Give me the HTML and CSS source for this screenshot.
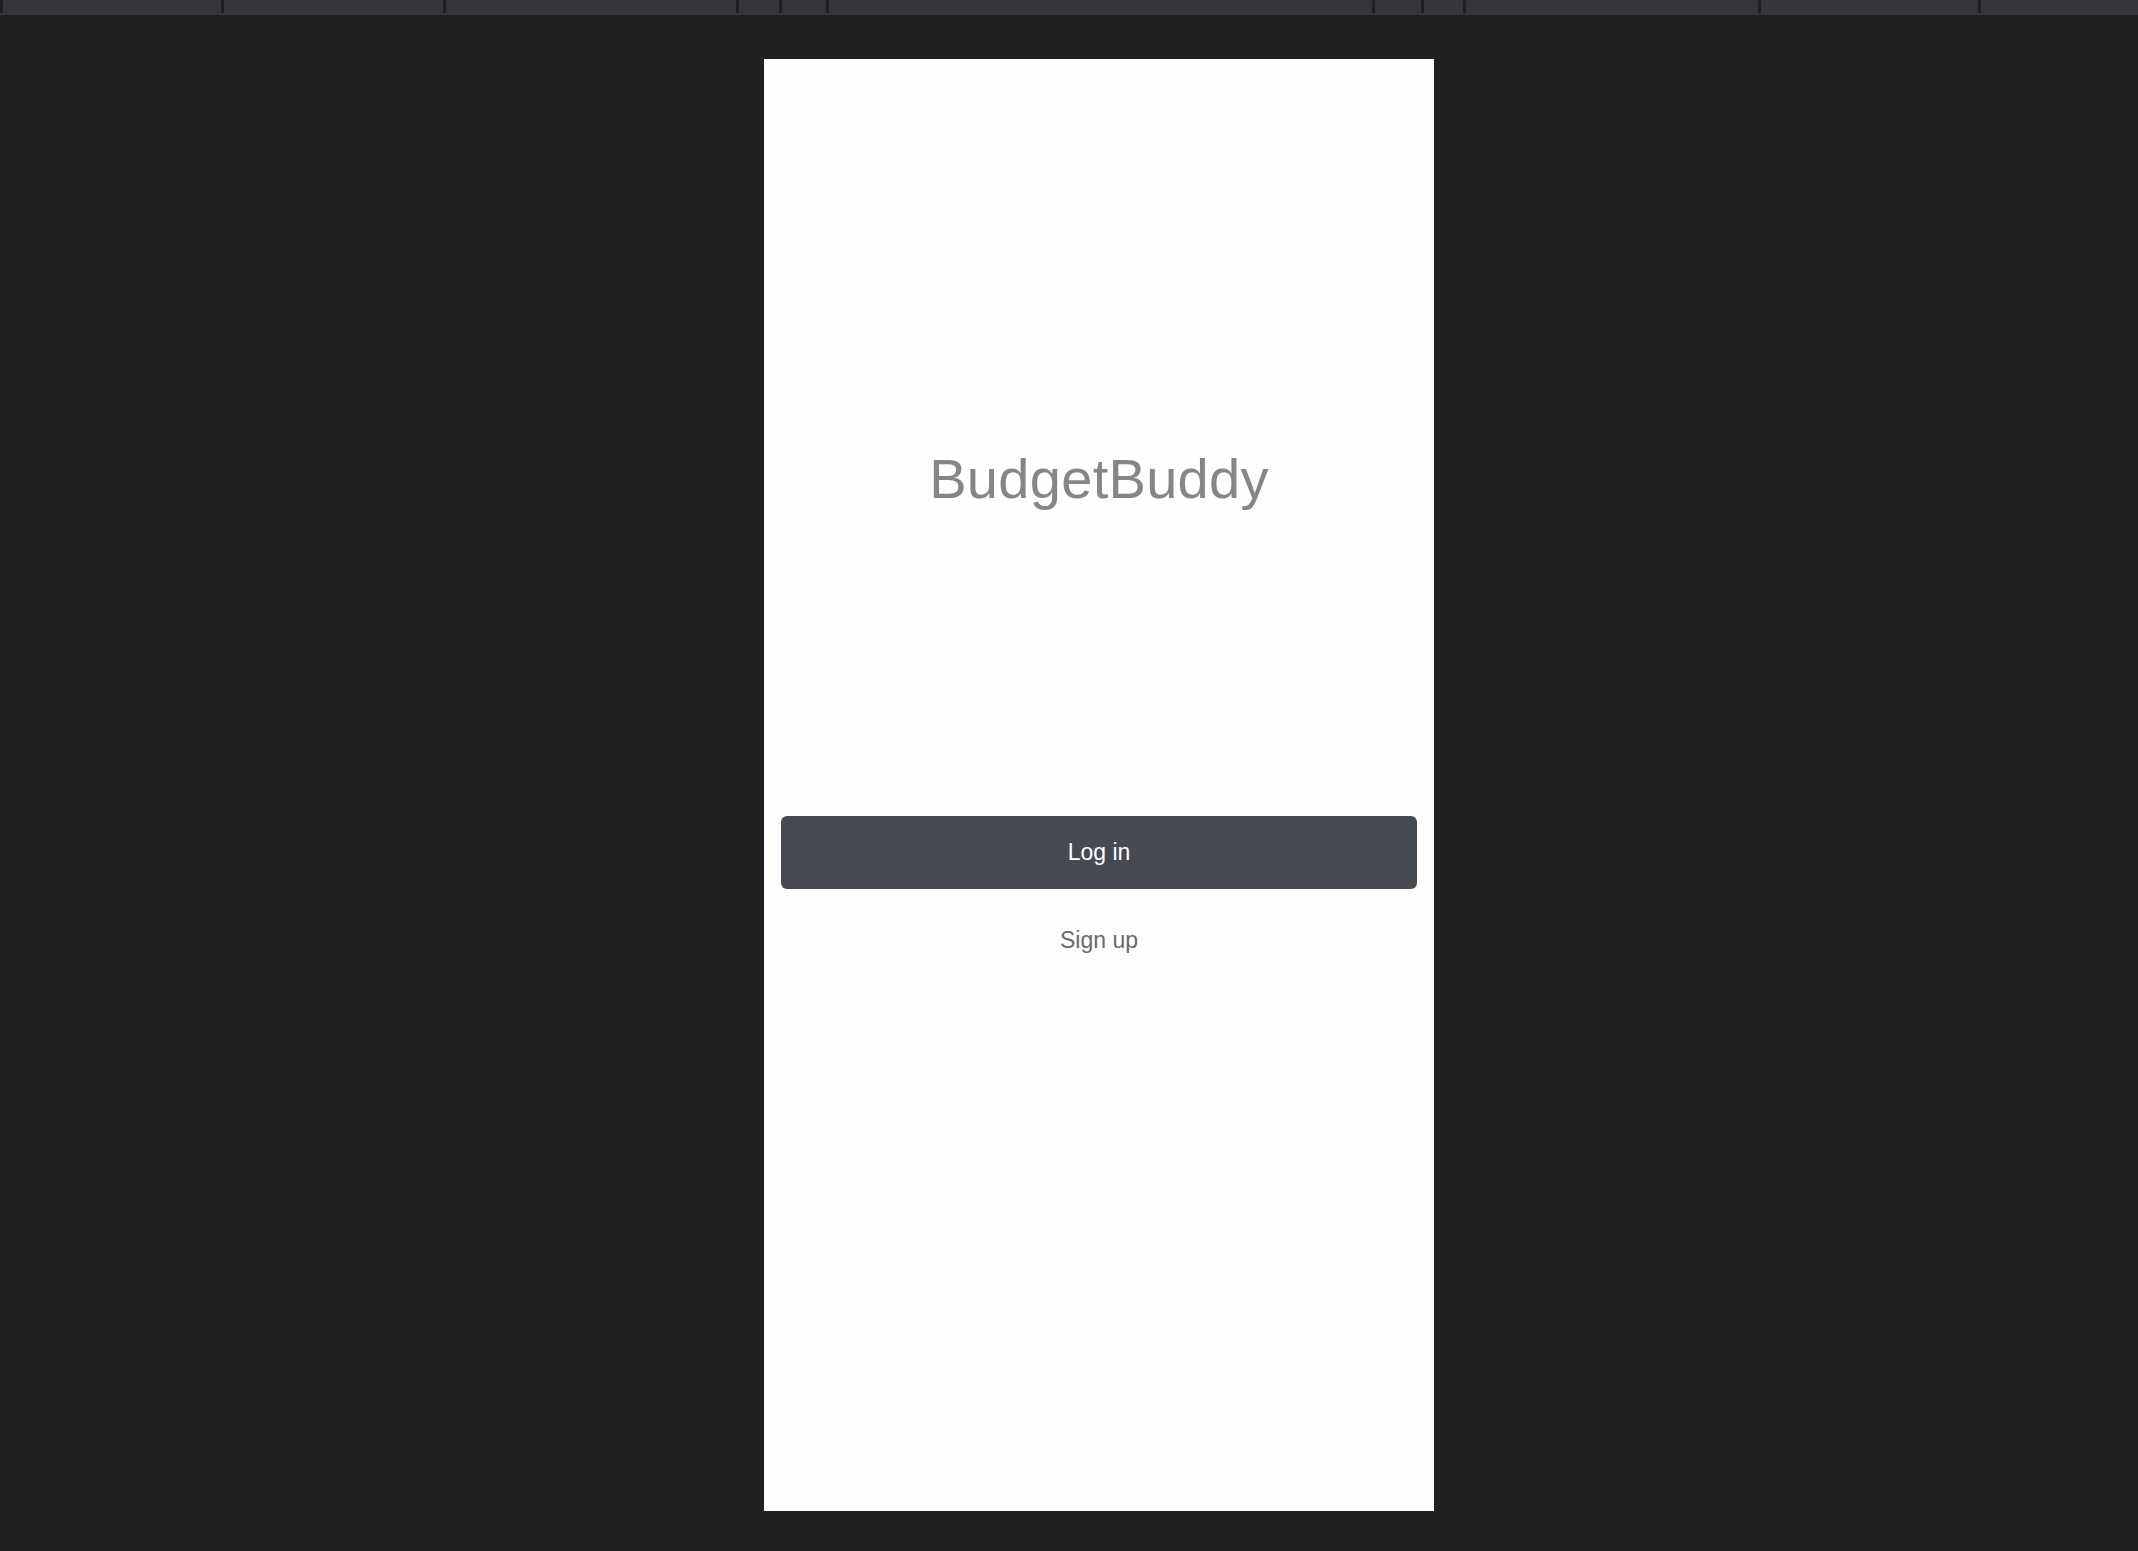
FILE: index.html
```html
<!DOCTYPE html>
<html lang="en">
<head>
<meta charset="utf-8">
<title>BudgetBuddy</title>
<link rel="stylesheet" href="styles.css">
</head>
<body>
<div class="tabbar">
  <div class="tab w221"></div>
  <div class="tab w222"></div>
  <div class="tab w293"></div>
  <div class="tab w43"></div>
  <div class="tab w47"></div>
  <div class="tab w546"></div>
  <div class="tab w49"></div>
  <div class="tab w42"></div>
  <div class="tab w295"></div>
  <div class="tab w220"></div>
  <div class="tab grow"></div>
</div>
<main class="stage">
  <section class="phone">
    <h1 class="title">BudgetBuddy</h1>
    <button class="login">Log in</button>
    <a class="signup" href="#">Sign up</a>
  </section>
</main>
</body>
</html>
```

FILE: styles.css
```css
html, body {
  margin: 0;
  padding: 0;
  background: #202123;
  font-family: "Liberation Sans", Arial, sans-serif;
}

.tabbar {
  display: flex;
  height: 15px;
  background: #35363a;
}

.tab {
  height: 15px;
  box-sizing: border-box;
  position: relative;
}

.tab::before {
  content: "";
  position: absolute;
  left: 0;
  top: 0;
  width: 3px;
  height: 13px;
  background: #1f2023;
}

.w221 { width: 221px; }
.w222 { width: 222px; }
.w293 { width: 293px; }
.w43 { width: 43px; }
.w47 { width: 47px; }
.w546 { width: 546px; }
.w49 { width: 49px; }
.w42 { width: 42px; }
.w295 { width: 295px; }
.w220 { width: 220px; }
.grow { flex: 1; }

.stage {
  display: flex;
  justify-content: flex-start;
  padding-top: 44px;
  padding-left: 764px;
}

.phone {
  width: 670px;
  height: 1452px;
  background: #fefefe;
  display: flex;
  flex-direction: column;
  align-items: center;
  padding: 388px 17px 0;
  box-sizing: border-box;
}

.title {
  margin: 0;
  font-size: 56px;
  line-height: 64px;
  font-weight: normal;
  color: #868686;
  letter-spacing: 0.3px;
}

.login {
  margin-top: 305px;
  width: 100%;
  height: 73px;
  border: none;
  border-radius: 6px;
  background: #464b53;
  color: #ffffff;
  font-family: "Liberation Sans", Arial, sans-serif;
  font-size: 23px;
  display: flex;
  align-items: center;
  justify-content: center;
  padding: 0;
}

.signup {
  margin-top: 37px;
  font-size: 23px;
  line-height: 28px;
  color: #6a6a6a;
  text-decoration: none;
}
```
